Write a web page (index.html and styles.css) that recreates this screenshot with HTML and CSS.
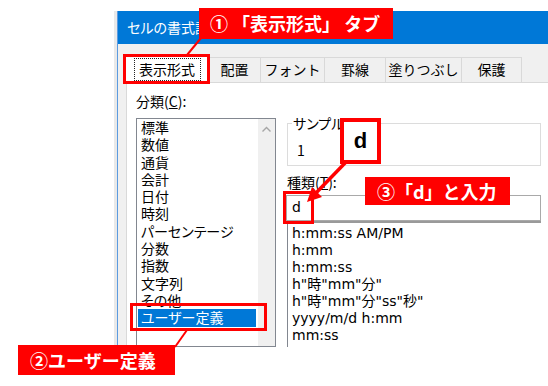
FILE: index.html
```html
<!DOCTYPE html>
<html lang="ja">
<head>
    <meta charset="UTF-8">
    <meta name="viewport" content="width=device-width, initial-scale=1.0">
    <title>セルの書式設定 - ユーザー定義</title>
    <link rel="stylesheet" href="styles.css">
</head>
<body>
    <div class="stage">
        <div class="dialog">
            <div class="titlebar">セルの書式設定</div>
            <div class="dialog-body">
                <div class="tabs">
                    <div class="tab active"><span class="focus">表示形式</span></div>
                    <div class="tab w-haichi">配置</div>
                    <div class="tab w-font">フォント</div>
                    <div class="tab w-keisen">罫線</div>
                    <div class="tab w-nuri">塗りつぶし</div>
                    <div class="tab w-hogo">保護</div>
                </div>
                <div class="panel">
                    <div class="left-col">
                        <div class="label">分類(<u>C</u>):</div>
                        <div class="listbox">
                            <ul class="items">
                                <li>標準</li>
                                <li>数値</li>
                                <li>通貨</li>
                                <li>会計</li>
                                <li>日付</li>
                                <li>時刻</li>
                                <li>パーセンテージ</li>
                                <li>分数</li>
                                <li>指数</li>
                                <li>文字列</li>
                                <li>その他</li>
                                <li class="selected">ユーザー定義</li>
                            </ul>
                            <div class="scrollbar">
                                <svg width="17" height="14" viewBox="0 0 17 14">
                                    <path d="M4.5 10.5 L8.5 6.5 L12.5 10.5" fill="none" stroke="#a6a6a6" stroke-width="1.4"/>
                                </svg>
                            </div>
                        </div>
                    </div>
                    <div class="right-col">
                        <fieldset class="sample">
                            <legend>サンプル</legend>
                            <div class="sample-value">1</div>
                        </fieldset>
                        <div class="label type-label">種類(<u>T</u>):</div>
                        <div class="input">d</div>
                        <ul class="formats">
                            <li>h:mm:ss AM/PM</li>
                            <li>h:mm</li>
                            <li>h:mm:ss</li>
                            <li>h"時"mm"分"</li>
                            <li>h"時"mm"分"ss"秒"</li>
                            <li>yyyy/m/d h:mm</li>
                            <li>mm:ss</li>
                        </ul>
                    </div>
                </div>
            </div>
        </div>

        <!-- annotations -->
        <div class="mark mark-tab"></div>
        <div class="mark mark-item"></div>
        <div class="mark mark-input"></div>

        <svg class="lines" width="548" height="386" viewBox="0 0 548 386">
            <line x1="201" y1="38" x2="187" y2="55" stroke="#f00" stroke-width="2"/>
            <line x1="175" y1="347" x2="187" y2="330" stroke="#f00" stroke-width="2"/>
            <line x1="346" y1="162" x2="315" y2="194" stroke="#f00" stroke-width="3.5"/>
            <polygon points="307,202 312,187 322,197" fill="#f00"/>
        </svg>

        <div class="callout callout-1">① 「表示形式」 タブ</div>
        <div class="callout callout-2">②ユーザー定義</div>
        <div class="callout callout-3">③「d」と入力</div>
        <div class="dbox">d</div>
    </div>
</body>
</html>
```

FILE: styles.css
```css
body {
    margin: 0;
    background-color: #fff;
    font-family: "Noto Sans CJK JP", sans-serif;
}
.stage {
    position: relative;
    width: 548px;
    height: 386px;
    overflow: hidden;
    background-color: #fff;
}
.dialog {
    margin-left: 117px;
    margin-top: 11px;
    height: 336px;
    overflow: hidden;
    border-left: 1px solid #5b9be0;
    box-shadow: -3px 0 0 #e9e9e9;
    display: flex;
    flex-direction: column;
}
.titlebar {
    height: 33px;
    line-height: 32px;
    padding-left: 9px;
    background-color: #0078d7;
    color: #fff;
    font-size: 14px;
    font-feature-settings: "palt";
}
.dialog-body {
    flex: 1;
    background-color: #f0f0f0;
    padding: 13px 0 0 8px;
    display: flex;
    flex-direction: column;
}
.tabs {
    display: flex;
    align-items: flex-end;
    height: 25px;
}
.tab {
    box-sizing: border-box;
    height: 25px;
    border: 1px solid #d9d9d9;
    border-bottom: none;
    margin-left: -1px;
    font-size: 14px;
    line-height: 23px;
    text-align: center;
    color: #000;
}
.tab.active {
    width: 86px;
    height: 27px;
    margin: 0 -1px 0 -2px;
    background-color: #fff;
    display: flex;
    align-items: center;
    justify-content: center;
}
.focus {
    display: block;
    width: 65px;
    height: 21px;
    line-height: 20px;
    border: 1px dotted #222;
    margin-top: 1px;
}
.w-haichi { width: 53px; }
.w-font { width: 65px; }
.w-keisen { width: 62px; }
.w-nuri { width: 77px; }
.w-hogo { width: 61px; }

.panel {
    flex: 1;
    background-color: #fff;
    border-top: 1px solid #d9d9d9;
    border-left: 1px solid #d9d9d9;
    padding: 9px 0 0 9px;
    display: flex;
    gap: 11px;
}
.label {
    font-size: 14px;
    line-height: 18px;
    color: #000;
}
.left-col {
    display: flex;
    flex-direction: column;
}
.listbox {
    margin-top: 8px;
    width: 140px;
    flex: 1;
    box-sizing: border-box;
    border: 1px solid #828790;
    display: flex;
}
.items {
    list-style: none;
    margin: 0;
    padding: 0 2px 0 1px;
    width: 121px;
    box-sizing: border-box;
}
.items li {
    height: 17.3px;
    line-height: 17px;
    padding-left: 3px;
    font-size: 14px;
    font-feature-settings: "palt";
    color: #000;
}
.items li.selected {
    background-color: #0078d7;
    color: #fff;
}
.scrollbar {
    width: 17px;
    background-color: #f0f0f0;
    padding-top: 2px;
}
.scrollbar svg {
    display: block;
}

.right-col {
    width: 254px;
    display: flex;
    flex-direction: column;
    padding-top: 24px;
}
.sample {
    margin: 0;
    padding: 12px 0 7px 9px;
    border: 1px solid #dcdcdc;
    min-width: 0;
}
.sample legend {
    padding: 0 1px;
    margin-left: -5px;
    font-size: 14px;
    line-height: 14px;
    font-feature-settings: "palt";
    color: #000;
}
.sample-value {
    font-size: 14px;
    line-height: 16px;
    color: #000;
}
.type-label {
    margin-top: 8px;
    line-height: 16px;
}
.input {
    margin-top: 5px;
    margin-left: -1px;
    height: 26px;
    box-sizing: border-box;
    border: 1px solid #a9a9a9;
    padding-left: 5px;
    font-family: "DejaVu Sans", "Noto Sans CJK JP", sans-serif;
    font-size: 14px;
    line-height: 23px;
    color: #000;
}
.formats {
    list-style: none;
    margin: 0;
    padding: 2px 0 0 4px;
    flex: 1;
    border-top: 2px solid #9a9a9a;
    border-left: 1px solid #828790;
}
.formats li {
    height: 17px;
    line-height: 17px;
    font-family: "DejaVu Sans", "Noto Sans CJK JP", sans-serif;
    font-size: 14px;
    color: #000;
    white-space: nowrap;
}

/* annotation layer */
.mark {
    position: absolute;
    box-sizing: border-box;
    border: 3px solid #f00;
}
.mark-tab {
    left: 123px;
    top: 54px;
    width: 87px;
    height: 30px;
}
.mark-item {
    left: 130px;
    top: 303px;
    width: 137px;
    height: 28px;
}
.mark-input {
    left: 283px;
    top: 191px;
    width: 31px;
    height: 33px;
}
.lines {
    position: absolute;
    left: 0;
    top: 0;
}
.callout {
    position: absolute;
    box-sizing: border-box;
    background-color: #f00;
    color: #fff;
    font-weight: bold;
    font-size: 18px;
    white-space: nowrap;
}
.callout-1 {
    left: 199px;
    top: 8px;
    width: 194px;
    height: 31px;
    line-height: 31px;
    padding-left: 11px;
}
.callout-2 {
    left: 18px;
    top: 345px;
    width: 157px;
    height: 30px;
    line-height: 30px;
    padding-left: 12px;
}
.callout-3 {
    left: 365px;
    top: 177px;
    width: 145px;
    height: 28px;
    line-height: 28px;
    padding-left: 12px;
}
.dbox {
    position: absolute;
    left: 340px;
    top: 118px;
    width: 41px;
    height: 46px;
    box-sizing: border-box;
    border: 4px solid #f00;
    background-color: #fff;
    color: #000;
    font-family: "Liberation Sans", Arial, sans-serif;
    font-weight: bold;
    font-size: 22px;
    line-height: 38px;
    text-align: center;
}
```
